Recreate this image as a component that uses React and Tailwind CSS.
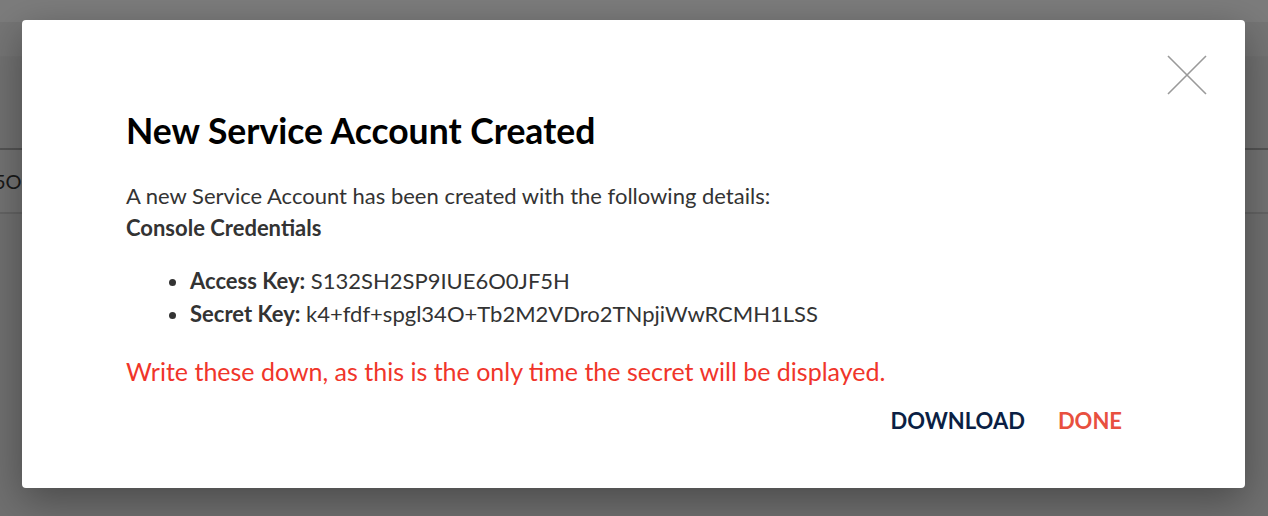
import { useState } from "react";

function CloseIcon() {
  return (
    <svg width="40" height="40" viewBox="0 0 40 40" fill="none">
      <path d="M1 1L39 39M39 1L1 39" stroke="#9a9a9a" strokeWidth="1.6" />
    </svg>
  );
}

function BackgroundPage() {
  return (
    <div className="flex h-full flex-col bg-[#f2f2f2]">
      <div className="h-[22px] bg-[#f8f8f8]" />
      <div className="h-[35px] border-b border-[#e4e4e4] bg-[#eaeaea]" />
      <div className="h-[93px] border-b-2 border-[#a9a9a9] bg-[#e2e2e2]" />
      <div className="-ml-[6px] flex h-[64px] items-center border-b-2 border-[#c8c8c8] bg-[#e6e6e6] text-[20px] text-[#333]">
        5O
      </div>
      <div className="flex-1 bg-[#e0e0e0]" />
    </div>
  );
}

export default function App() {
  const [open, setOpen] = useState(true);

  return (
    <div className="relative h-[516px] w-[1268px] overflow-hidden font-['Lato','Noto_Sans',sans-serif]">
      <BackgroundPage />
      <div className="absolute inset-0 bg-black/50" />
      {open && (
        <div className="absolute left-[22px] top-[20px] h-[468px] w-[1223px] rounded-[4px] bg-white shadow-[0_12px_40px_rgba(0,0,0,0.35)]">
          <button
            onClick={() => setOpen(false)}
            className="absolute right-[38px] top-[35px]"
          >
            <CloseIcon />
          </button>
          <div className="flex flex-col pl-[104px] pr-[123px] pt-[91px]">
            <h2 className="text-[35.5px] font-bold leading-[40px] text-black">
              New Service Account Created
            </h2>
            <p className="mt-[29px] text-[22px] leading-[32px] text-[#333]">
              A new Service Account has been created with the following details:
            </p>
            <p className="text-[22px] font-bold leading-[32px] text-[#333]">
              Console Credentials
            </p>
            <ul className="mt-[20px] list-disc pl-[64px] text-[22px] leading-[33px] text-[#333]">
              <li>
                <b>Access Key:</b> S132SH2SP9IUE6O0JF5H
              </li>
              <li>
                <b>Secret Key:</b> k4+fdf+spgl34O+Tb2M2VDro2TNpjiWwRCMH1LSS
              </li>
            </ul>
            <p className="mt-[25px] text-[25px] leading-[32px] text-[#f0352a]">
              Write these down, as this is the only time the secret will be displayed.
            </p>
            <div className="mt-[20px] flex justify-end gap-[33px]">
              <button className="text-[22px] font-bold leading-[28px] text-[#0b1f44]">DOWNLOAD</button>
              <button className="text-[22px] font-bold leading-[28px] text-[#e8503f]">DONE</button>
            </div>
          </div>
        </div>
      )}
    </div>
  );
}
